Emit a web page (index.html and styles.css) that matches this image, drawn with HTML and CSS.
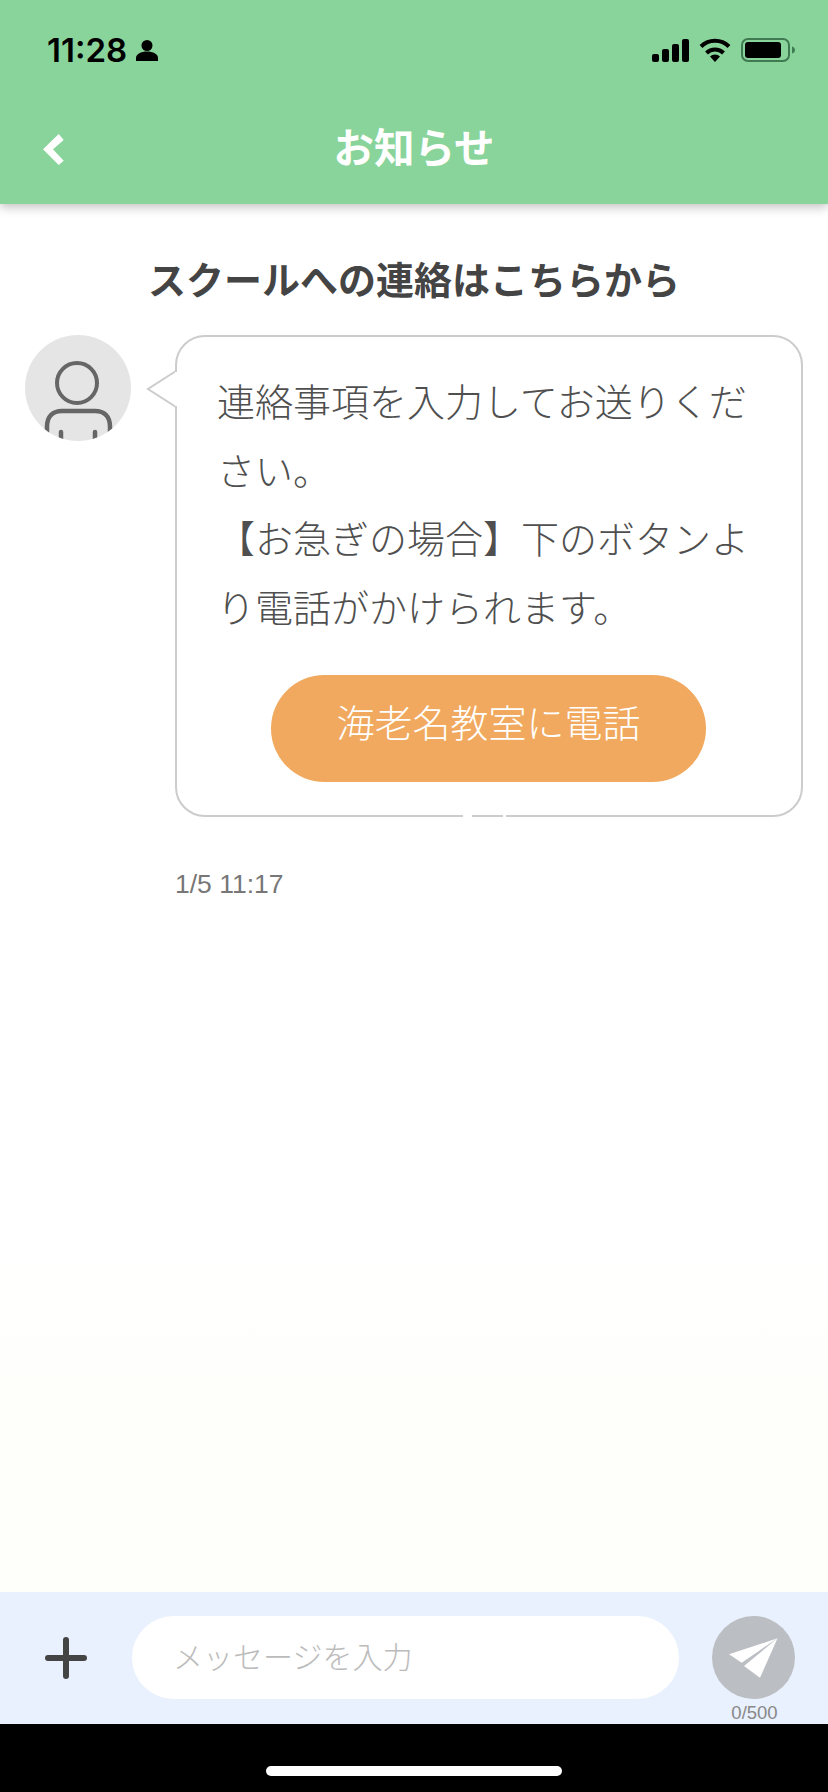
FILE: index.html
```html
<!DOCTYPE html>
<html>
  <head>
    <title>お知らせ</title>
    <link rel="stylesheet" href="styles.css">
  </head>
  <body>
    <div class="screen">
      <header class="top">
        <div class="status">
          <div class="status-left">
            <span class="time">11:28</span>
            <svg class="person" width="22" height="21" viewBox="0 0 22 21">
              <circle cx="11" cy="5.5" r="5.5" />
              <path d="M0 21v-3c0-4 5-6.5 11-6.5s11 2.5 11 6.5v3z" />
            </svg>
          </div>
          <div class="status-right">
            <svg width="37" height="23" viewBox="0 0 37 23">
              <rect x="0" y="15" width="7" height="8" rx="2" />
              <rect x="10" y="10" width="7" height="13" rx="2" />
              <rect x="20" y="5" width="7" height="18" rx="2" />
              <rect x="30" y="0" width="7" height="23" rx="2" />
            </svg>
            <svg width="32" height="24" viewBox="0 0 32 24">
              <path d="M16 24l-5-5.5a7 7 0 0 1 10 0z" />
              <path d="M7.5 15a12 12 0 0 1 17 0" fill="none" stroke="#000" stroke-width="4" />
              <path d="M2 8.500a20 20 0 0 1 28 0" fill="none" stroke="#000" stroke-width="4" />
            </svg>
            <svg width="54" height="24" viewBox="0 0 54 24">
              <rect x="1" y="1" width="47" height="22" rx="6" fill="none" stroke="#3f7a52" stroke-width="2" />
              <rect x="4" y="4" width="36" height="16" rx="3" />
              <path d="M51 8.500c2 .5 3 2 3 3.500s-1 3-3 3.500z" fill="#3f7a52" />
            </svg>
          </div>
        </div>
        <div class="nav">
          <svg class="back" width="21" height="31" viewBox="0 0 21 31">
            <path d="M0 15.300L15.700 0l5 6L10 15.300l10.700 11.400-5 4.300z" fill="#fff" />
          </svg>
          <h1 class="nav-title">お知らせ</h1>
        </div>
      </header>

      <main class="content">
        <h2 class="heading">スクールへの連絡はこちらから</h2>
        <div class="message">
          <div class="avatar">
            <svg width="106" height="106" viewBox="0 0 106 106">
              <circle cx="52" cy="48" r="20" fill="none" stroke="#666" stroke-width="4" />
              <path d="M22 106V92c0-11 6-16 15-16h33c9 0 15 5 15 16v14" fill="none" stroke="#666" stroke-width="4.500" />
              <path d="M36 97v10M70 97v10" fill="none" stroke="#666" stroke-width="4.500" stroke-linecap="round" />
            </svg>
          </div>
          <div class="bubble">
            <svg class="tail" width="32" height="40" viewBox="0 0 32 40">
              <path d="M30 2L2 20l28 18" fill="#fff" stroke="#ccc" stroke-width="2" />
              <rect x="29" y="3" width="3" height="34" fill="#fff" />
            </svg>
            <p class="bubble-text">連絡事項を入力してお送りください。<br>【お急ぎの場合】下のボタンより電話がかけられます。</p>
            <a class="call-btn">海老名教室に電話</a>
            <span class="speck speck-a"></span>
            <span class="speck speck-b"></span>
          </div>
        </div>
        <div class="stamp">1/5 11:17</div>
      </main>

      <footer class="composer">
        <svg class="plus" width="42" height="42" viewBox="0 0 42 42">
          <path d="M21 3v36M3 21h36" stroke="#444" stroke-width="6" stroke-linecap="round" />
        </svg>
        <div class="input">メッセージを入力</div>
        <div class="send-wrap">
          <div class="send">
            <svg width="83" height="83" viewBox="0 0 83 83">
              <path d="M65.500 22.300L17 38.300l12.700 8.400z" fill="#fff" />
              <path d="M65.500 22.300L32 50l16 11.700z" fill="#fff" />
            </svg>
          </div>
          <span class="count">0/500</span>
        </div>
      </footer>
      <div class="home-bar">
        <span class="home-pill"></span>
      </div>
    </div>
  </body>
</html>
```

FILE: styles.css
```css
* {
  box-sizing: border-box;
}
html,
body {
  margin: 0;
  padding: 0;
}
body {
  width: 828px;
  height: 1792px;
  font-family: "Noto Sans CJK JP", "Liberation Sans", sans-serif;
  overflow: hidden;
}
.screen {
  display: flex;
  flex-direction: column;
  height: 1792px;
  background: linear-gradient(#fff 1250px, #fefefa 1450px);
}

/* header */
.top {
  height: 204px;
  background-color: #89d49a;
  box-shadow: 0 3px 10px rgba(0, 0, 0, 0.25);
  flex-shrink: 0;
}
.status {
  display: flex;
  justify-content: space-between;
  align-items: center;
  height: 75px;
  padding: 25px 33px 0 47px;
}
.status-left {
  display: flex;
  align-items: center;
  gap: 9px;
}
.time {
  font-family: Inter, "Liberation Sans", sans-serif;
  font-size: 33px;
  font-weight: 600;
  color: #000;
}
.status-right {
  display: flex;
  align-items: center;
  gap: 10px;
}
.nav {
  position: relative;
  display: flex;
  justify-content: center;
  align-items: center;
  height: 60px;
  margin-top: 40px;
}
.back {
  position: absolute;
  left: 43px;
  top: 19px;
}
.nav-title {
  margin: 0;
  font-size: 40.5px;
  font-weight: 700;
  color: #fff;
}

/* content */
.content {
  flex: 1;
  padding: 46px 25px 0;
}
.heading {
  margin: 0 0 29px;
  font-size: 38px;
  line-height: 56px;
  font-weight: 700;
  color: #444;
  text-align: center;
}
.message {
  display: flex;
  align-items: flex-start;
  gap: 44px;
}
.avatar {
  width: 106px;
  height: 106px;
  border-radius: 50%;
  background-color: #e5e5e5;
  overflow: hidden;
  flex-shrink: 0;
}
.avatar svg {
  display: block;
}
.bubble {
  position: relative;
  width: 628px;
  height: 482px;
  padding: 29px 38px 0 40px;
  background-color: #fff;
  border: 2px solid #ccc;
  border-radius: 30px;
}
.tail {
  position: absolute;
  left: -31px;
  top: 32px;
}
.bubble-text {
  margin: 0;
  font-size: 38px;
  line-height: 68.500px;
  font-weight: 300;
  color: #4f4f4f;
}
.call-btn {
  display: block;
  width: 435px;
  height: 107px;
  margin: 35px 0 0 54px;
  border-radius: 54px;
  background-color: #f0a95e;
  color: #fff;
  font-size: 38px;
  font-weight: 300;
  line-height: 92px;
  text-align: center;
}
.speck {
  position: absolute;
  bottom: -2px;
  height: 3px;
  background-color: #fff;
}
.speck-a {
  left: 286px;
  width: 9px;
}
.speck-b {
  left: 326px;
  width: 3px;
}
.stamp {
  margin: 49px 0 0 150px;
  font-family: "Liberation Sans", Arial, sans-serif;
  font-size: 26.5px;
  line-height: 36px;
  color: #777;
}

/* bottom bar */
.composer {
  display: flex;
  align-items: flex-start;
  height: 132px;
  padding: 24px 33px 0 45px;
  background-color: #eaf1fe;
  flex-shrink: 0;
}
.plus {
  margin-top: 21px;
  margin-right: 45px;
  flex-shrink: 0;
}
.input {
  width: 547px;
  height: 83px;
  padding-left: 41px;
  border-radius: 42px;
  background-color: #fff;
  color: #bbb;
  font-size: 30px;
  font-weight: 300;
  line-height: 78px;
}
.send-wrap {
  display: flex;
  flex-direction: column;
  align-items: center;
  margin-left: 33px;
}
.send {
  width: 83px;
  height: 83px;
  border-radius: 50%;
  background-color: #bbbec3;
}
.send svg {
  display: block;
}
.count {
  margin: 3px 0 0 2px;
  font-family: "Liberation Sans", Arial, sans-serif;
  font-size: 18.5px;
  line-height: 22px;
  color: #888;
}
.home-bar {
  display: flex;
  justify-content: center;
  height: 68px;
  padding-top: 42px;
  background-color: #000;
  flex-shrink: 0;
}
.home-pill {
  width: 296px;
  height: 10px;
  border-radius: 5px;
  background-color: #fff;
}
```
